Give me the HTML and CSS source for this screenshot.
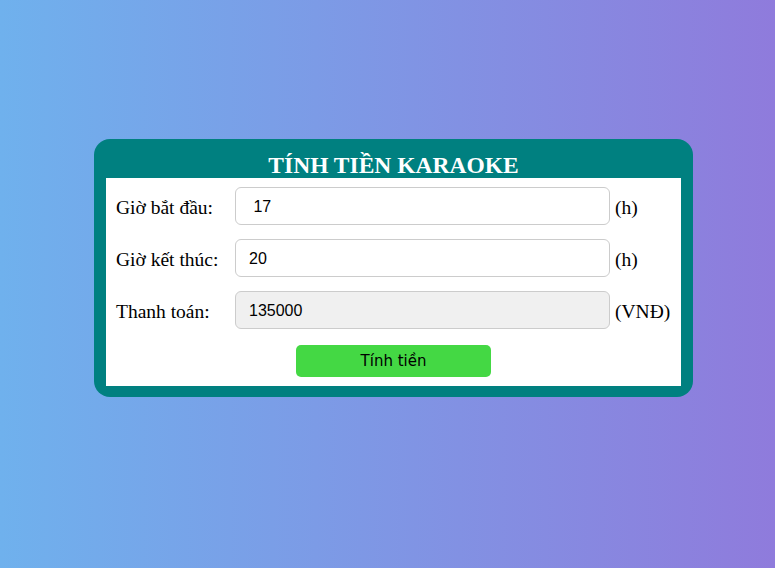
FILE: index.html
```html
<!DOCTYPE html>
<html lang="vi">
<head>
<meta charset="utf-8">
<title>Tính tiền karaoke</title>
<link rel="stylesheet" href="styles.css">
</head>
<body>
<div class="card">
  <h1 class="title">TÍNH TIỀN KARAOKE</h1>
  <form class="panel">
    <div class="grid">
      <label class="label" for="start">Giờ bắt đầu:</label>
      <input class="field" id="start" type="text" value=" 17">
      <span class="unit">(h)</span>
      <label class="label" for="end">Giờ kết thúc:</label>
      <input class="field" id="end" type="text" value="20">
      <span class="unit">(h)</span>
      <label class="label" for="pay">Thanh toán:</label>
      <input class="field readonly" id="pay" type="text" value="135000" readonly>
      <span class="unit">(VNĐ)</span>
    </div>
    <div class="actions">
      <button class="btn" type="button">Tính tiền</button>
    </div>
  </form>
</div>
</body>
</html>
```
FILE: styles.css
```css
html, body {
  margin: 0;
  padding: 0;
  height: 100%;
}
body {
  background: linear-gradient(to right, #6fb1ed, #8f7bdc);
  font-family: "Liberation Serif", "Times New Roman", serif;
  overflow: hidden;
}
.card {
  width: 575px;
  margin: 139px 0 0 94px;
  background: #008080;
  border-radius: 16px;
  padding: 0 12px 11px;
}
.title {
  margin: 0;
  height: 39px;
  line-height: 53px;
  text-align: center;
  color: #fff;
  font-size: 23.5px;
  font-weight: bold;
  overflow: hidden;
}
.panel {
  background: #fff;
  padding: 9px 0 9px 10px;
  margin: 0;
}
.grid {
  display: grid;
  grid-template-columns: 114px 375px auto;
  column-gap: 5px;
  row-gap: 14px;
  align-items: center;
}
.label, .unit {
  font-size: 19.5px;
  color: #000;
  padding-top: 3px;
}
.field {
  box-sizing: border-box;
  width: 375px;
  height: 38px;
  border: 1px solid #ccc;
  border-radius: 6px;
  padding: 2px 13px 0;
  font-family: "Liberation Sans", Arial, sans-serif;
  font-size: 16px;
  color: #000;
  background: #fff;
  outline: none;
}
.readonly {
  background: #f0f0f0;
}
.actions {
  display: flex;
  justify-content: center;
  margin-top: 16px;
  padding-right: 10px;
}
.btn {
  width: 195px;
  height: 32px;
  border: none;
  border-radius: 5px;
  background: #44d844;
  color: #000;
  font-family: "DejaVu Sans", Tahoma, sans-serif;
  font-size: 15px;
  padding: 0;
}
```
